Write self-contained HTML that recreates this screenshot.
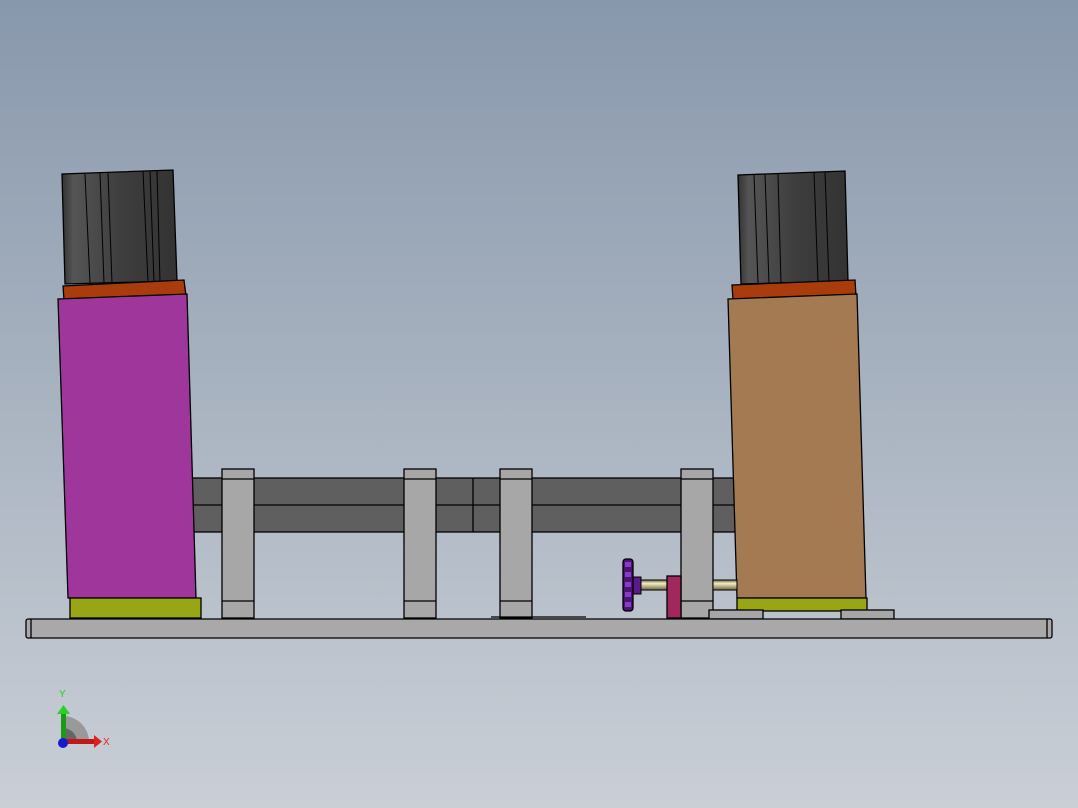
<!DOCTYPE html><html><head><style>body{margin:0}svg{display:block}</style></head><body>
<svg width="1078" height="808" viewBox="0 0 1078 808" xmlns="http://www.w3.org/2000/svg">
<defs>
<linearGradient id="bg" x1="0" y1="0" x2="0" y2="1"><stop offset="0" stop-color="#8898ac"/><stop offset="1" stop-color="#cacfd6"/></linearGradient>
<linearGradient id="sh" x1="0" y1="0" x2="0" y2="1"><stop offset="0" stop-color="#6b6440"/><stop offset=".35" stop-color="#f4f0c0"/><stop offset="1" stop-color="#6b6440"/></linearGradient>
<linearGradient id="dk" x1="0" y1="0" x2="1" y2="0"><stop offset="0" stop-color="#333"/><stop offset=".1" stop-color="#555"/><stop offset=".5" stop-color="#3e3e3e"/><stop offset="1" stop-color="#333"/></linearGradient>
</defs>
<rect width="1078" height="808" fill="url(#bg)"/>
<g stroke="#000" stroke-width="1.3">
<!-- beams -->
<rect x="192" y="478" width="544" height="54" fill="#5f5f5f"/>
<line x1="192" y1="505" x2="736" y2="505"/>
<line x1="473" y1="478" x2="473" y2="532"/>
<!-- posts -->
<g fill="#a7a7a7">
<rect x="222" y="469" width="32" height="149"/><line x1="222" y1="479" x2="254" y2="479"/><line x1="222" y1="601" x2="254" y2="601"/>
<rect x="404" y="469" width="32" height="149"/><line x1="404" y1="479" x2="436" y2="479"/><line x1="404" y1="601" x2="436" y2="601"/>
<rect x="500" y="469" width="32" height="149"/><line x1="500" y1="479" x2="532" y2="479"/><line x1="500" y1="601" x2="532" y2="601"/>
<rect x="681" y="469" width="32" height="149"/><line x1="681" y1="479" x2="713" y2="479"/><line x1="681" y1="601" x2="713" y2="601"/>
</g>
<!-- left motor -->
<polygon points="62,174 173,170 177,281 65,284" fill="url(#dk)"/>
<g stroke-width="1"><line x1="85" y1="174" x2="90" y2="283"/><line x1="100" y1="173" x2="104" y2="283"/><line x1="108" y1="173" x2="112" y2="283"/><line x1="143" y1="171" x2="148" y2="282"/><line x1="150" y1="171" x2="154" y2="282"/><line x1="157" y1="171" x2="160" y2="282"/></g>
<polygon points="63,286 184,280 186,296 64,300" fill="#a83c0c"/>
<polygon points="58,299 187,294 196,598 68,598" fill="#9e369c"/>
<rect x="70" y="598" width="131" height="20" fill="#98a514"/>
<!-- right motor -->
<polygon points="738,175 845,171 848,281 741,284" fill="url(#dk)"/>
<g stroke-width="1"><line x1="754" y1="175" x2="758" y2="283"/><line x1="765" y1="174" x2="769" y2="283"/><line x1="778" y1="174" x2="781" y2="283"/><line x1="814" y1="172" x2="818" y2="282"/><line x1="825" y1="172" x2="829" y2="282"/></g>
<polygon points="732,285 855,280 856,296 733,300" fill="#a83c0c"/>
<polygon points="728,299 857,294 866,598 737,598" fill="#a37a52"/>
<rect x="737" y="598" width="130" height="13" fill="#98a514"/>
<!-- small plates -->
<rect x="709" y="610" width="54" height="9" fill="#a7a7a7"/>
<rect x="841" y="610" width="53" height="9" fill="#a7a7a7"/>
<line x1="491" y1="617" x2="586" y2="617"/>
<!-- shafts, knob -->
<rect x="641" y="580" width="26" height="10" fill="url(#sh)" stroke-width="1"/>
<rect x="713" y="580" width="24" height="10" fill="url(#sh)" stroke-width="1"/>
<rect x="667" y="576" width="14" height="42" fill="#a0285c"/>
<rect x="632" y="577" width="9" height="17" fill="#5a1a8a" stroke-width="1"/>
<rect x="623" y="559" width="10" height="52" rx="3" fill="#4a1470"/>
<g fill="#8a3ac8" stroke="none"><rect x="625" y="562" width="6" height="5"/><rect x="625" y="572" width="6" height="5"/><rect x="625" y="582" width="6" height="5"/><rect x="625" y="592" width="6" height="5"/><rect x="625" y="602" width="6" height="5"/></g>
<!-- base plate -->
<rect x="26" y="619" width="1026" height="19" rx="2" fill="#a9a9a9"/>
<line x1="31" y1="619" x2="31" y2="638"/><line x1="1047" y1="619" x2="1047" y2="638"/>
</g>
<!-- triad -->
<path d="M63 742 L63 716 A26 26 0 0 1 89 742 Z" fill="#999"/>
<path d="M63 742 L63 728 A14 14 0 0 1 77 742 Z" fill="#666"/>
<rect x="61" y="712" width="5" height="30" fill="#1a9a1a"/>
<polygon points="57,714 63.5,705 70,714" fill="#2ad02a"/>
<rect x="63" y="739" width="32" height="5" fill="#c01818"/>
<polygon points="94,735 102,741.5 94,748" fill="#e02020"/>
<circle cx="63" cy="743" r="5" fill="#1818d0"/>
<text x="59" y="697" font-family="Liberation Sans,sans-serif" font-size="10" fill="#2c2">Y</text>
<text x="103" y="745" font-family="Liberation Sans,sans-serif" font-size="10" fill="#e22">X</text>
</svg>
</body></html>
